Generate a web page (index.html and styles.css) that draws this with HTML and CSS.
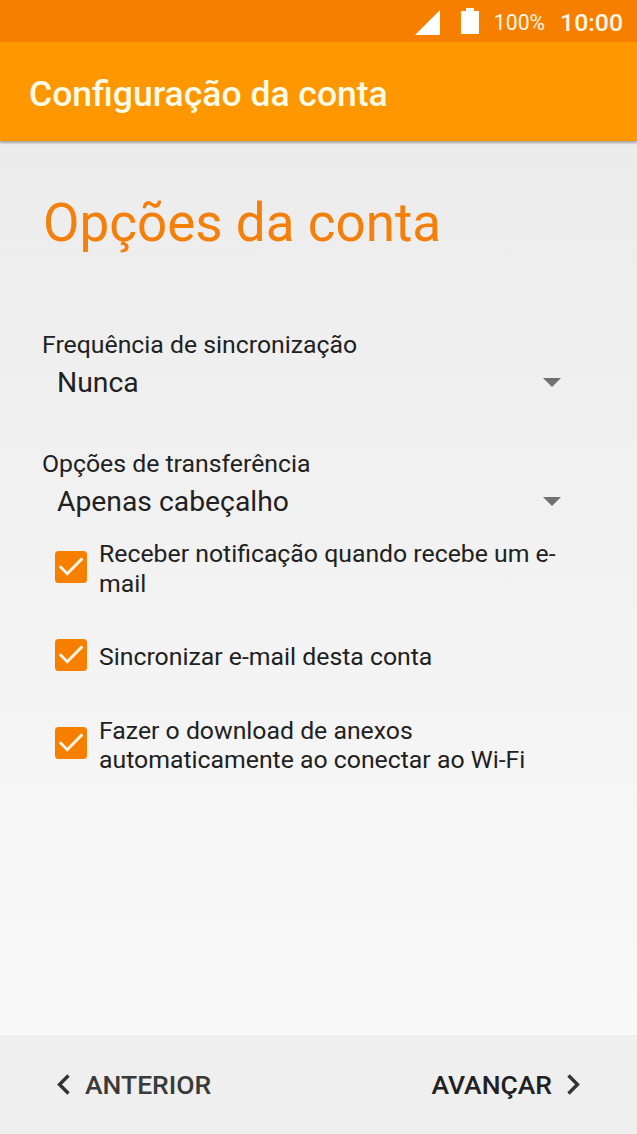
FILE: index.html
```html
<!DOCTYPE html>
<html lang="pt">
<head>
<meta charset="utf-8">
<title>Configuração da conta</title>
<link rel="stylesheet" href="styles.css">
</head>
<body>
<div class="screen">
  <div class="status">
    <svg class="signal" width="25" height="25" viewBox="0 0 25 25"><path d="M25 0V25H0Z"/></svg>
    <svg class="battery" width="18" height="26" viewBox="0 0 18 26"><path d="M5 0h8v3h5v23H0V3h5Z"/></svg>
    <span class="percent">100%</span>
    <span class="time">10:00</span>
  </div>
  <header class="appbar"><span class="title">Configuração da conta</span></header>
  <main class="content">
    <h1 class="heading">Opções da conta</h1>
    <div class="field">
      <div class="label">Frequência de sincronização</div>
      <div class="spinner"><span>Nunca</span><svg class="caret" width="18" height="9" viewBox="0 0 18 9"><path d="M0 0H18L9 9Z"/></svg></div>
    </div>
    <div class="field">
      <div class="label">Opções de transferência</div>
      <div class="spinner"><span>Apenas cabeçalho</span><svg class="caret" width="18" height="9" viewBox="0 0 18 9"><path d="M0 0H18L9 9Z"/></svg></div>
    </div>
    <div class="options">
      <div class="option">
        <svg class="check" width="32" height="32" viewBox="0 0 32 32"><rect width="32" height="32" rx="3.5"/><path d="M4.8 15.2L12.3 22.7L27.3 7.4"/></svg>
        <span class="option-text">Receber notificação quando recebe um e-<br>mail</span>
      </div>
      <div class="option">
        <svg class="check" width="32" height="32" viewBox="0 0 32 32"><rect width="32" height="32" rx="3.5"/><path d="M4.8 15.2L12.3 22.7L27.3 7.4"/></svg>
        <span class="option-text">Sincronizar e-mail desta conta</span>
      </div>
      <div class="option">
        <svg class="check" width="32" height="32" viewBox="0 0 32 32"><rect width="32" height="32" rx="3.5"/><path d="M4.8 15.2L12.3 22.7L27.3 7.4"/></svg>
        <span class="option-text">Fazer o download de anexos<br>automaticamente ao conectar ao Wi-Fi</span>
      </div>
    </div>
  </main>
  <footer class="footer">
    <div class="nav prev"><svg class="chevron" width="13" height="21" viewBox="0 0 13 21"><path d="M11.5 1.5L2.5 10.5L11.5 19.5"/></svg><span>ANTERIOR</span></div>
    <div class="nav next"><span>AVANÇAR</span><svg class="chevron" width="13" height="21" viewBox="0 0 13 21"><path d="M1.5 1.5L10.5 10.5L1.5 19.5"/></svg></div>
  </footer>
</div>
</body>
</html>
```

FILE: styles.css
```css
* { box-sizing: border-box; }
body { margin: 0; font-family: Roboto, sans-serif; color: #212121; }
svg { display: block; flex: none; }
.screen {
  display: flex;
  flex-direction: column;
  width: 637px;
  height: 1134px;
  overflow: hidden;
  white-space: nowrap;
  background: linear-gradient(#ececec 142px, #f9f9f9 1034px);
}
.status {
  display: flex;
  align-items: center;
  justify-content: flex-end;
  flex: none;
  height: 42px;
  padding-right: 14px;
  background: #f77f00;
  color: #fff6e6;
}
.signal, .battery { fill: #fff; }
.signal { margin-top: 2px; }
.battery { margin: 0 15px 0 21px; }
.percent { margin: 2px 15px 0 0; font-size: 21.2px; }
.time { font-size: 24.8px; font-weight: 500; padding-top: 3px; }
.appbar {
  display: flex;
  align-items: center;
  flex: none;
  height: 99px;
  padding: 5px 0 0 29px;
  background: #ff9800;
  box-shadow: 0 2px 2px rgba(0, 0, 0, .3);
}
.title { color: #fffbe9; font-size: 35.5px; font-weight: 500; }
.content { flex: 1; padding: 51px 74px 0 42px; }
.heading {
  height: 138px;
  margin: 0 0 0 1px;
  color: #f57f0b;
  font-size: 53px;
  font-weight: 400;
  line-height: 62px;
}
.field { height: 119px; }
.label { height: 34px; font-size: 24.8px; line-height: 29px; }
.spinner {
  display: flex;
  align-items: center;
  justify-content: space-between;
  height: 37px;
  padding: 0 2px 0 15px;
  font-size: 28.3px;
}
.caret { fill: #717171; }
.options { margin-top: -45px; padding-left: 13px; }
.option { display: flex; align-items: center; gap: 12px; height: 88.2px; }
.option-text { padding-top: 3px; font-size: 24.8px; line-height: 29.2px; }
.check { fill: #f77f00; }
.check path { fill: none; stroke: #fff3e3; stroke-width: 3; }
.footer {
  display: flex;
  align-items: center;
  justify-content: space-between;
  flex: none;
  height: 99px;
  padding: 0 57px;
  background: #efefef;
}
.nav { display: flex; align-items: center; font-size: 26.5px; font-weight: 500; }
.prev { gap: 15px; color: #3a3a3a; }
.next { gap: 15px; }
.chevron { fill: none; stroke: #333; stroke-width: 3.4; }
```
